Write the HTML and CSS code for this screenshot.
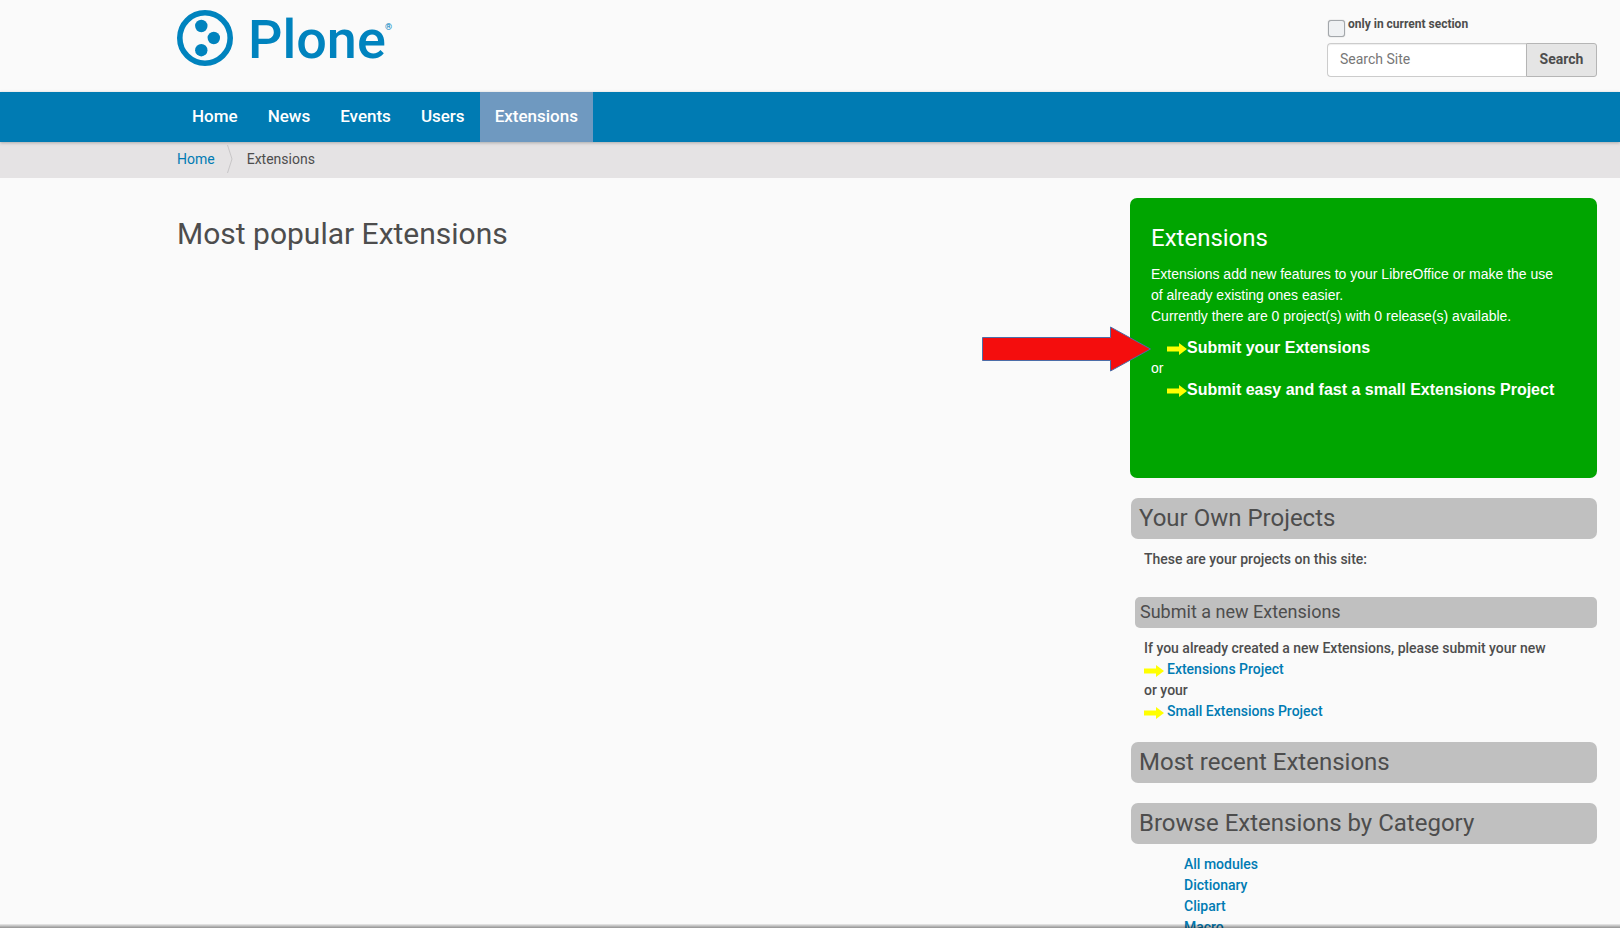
FILE: index.html
```html
<!DOCTYPE html>
<html lang="en">
<head>
<meta charset="utf-8">
<title>Most popular Extensions</title>
<link rel="stylesheet" href="styles.css">
</head>
<body>
<svg class="defs" aria-hidden="true"><symbol id="arrow" viewBox="0 0 20 12"><path d="M0 3.500h12V0l8 6-8 6V8.500H0z" fill="#ff0"/></symbol></svg>
<div class="page">
  <header class="header wrap">
    <a class="logo" href="#" aria-label="Plone">
      <svg width="220" height="70" viewBox="0 0 220 70">
        <circle cx="28" cy="28" r="25.200" fill="none" stroke="#0083be" stroke-width="5.600"/>
        <g fill="#0083be"><circle cx="24.300" cy="16" r="6.200"/><circle cx="36.800" cy="28" r="6.200"/><circle cx="24.300" cy="40.200" r="6.200"/>
        <text class="logo-name" x="71" y="48">Plone</text><text class="logo-mark" x="208" y="20">®</text></g>
      </svg>
    </a>
    <form class="search">
      <div class="section-only"><input type="checkbox" id="only"><label for="only">only in current section</label></div>
      <div class="search-row"><input class="search-field" type="text" placeholder="Search Site" aria-label="Search Site"><button class="search-button" type="button">Search</button></div>
    </form>
  </header>
  <nav class="nav wrap">
    <a href="#">Home</a><a href="#">News</a><a href="#">Events</a><a href="#">Users</a><a class="active" href="#">Extensions</a>
  </nav>
  <div class="crumbs wrap">
    <a href="#">Home</a>
    <svg class="crumb-sep" width="6" height="28" viewBox="0 0 6 28"><path d="M.5 0l4.500 14L.5 28" fill="none" stroke="#c8c6c7"/></svg>
    <span>Extensions</span>
  </div>
  <div class="columns wrap">
    <main><h1>Most popular Extensions</h1></main>
    <aside class="sidebar">
      <section class="promo">
        <svg class="pointer" width="170" height="46" viewBox="0 0 170 46"><path d="M.5 11.500h128V1l40 22-40 22V34.500H.5z" fill="#f40d0d" stroke="#4c6da8"/></svg>
        <h2>Extensions</h2>
        <p>Extensions add new features to your LibreOffice or make the use of already existing ones easier.<br>Currently there are 0 project(s) with 0 release(s) available.</p>
        <div class="submit">
          <a href="#"><svg class="arrow"><use href="#arrow"/></svg>Submit your Extensions</a>
          <span>or</span>
          <a href="#"><svg class="arrow"><use href="#arrow"/></svg>Submit easy and fast a small Extensions Project</a>
        </div>
      </section>
      <h2 class="bar">Your Own Projects</h2>
      <p class="note">These are your projects on this site:</p>
      <h3 class="bar bar-small">Submit a new Extensions</h3>
      <div class="note links">
        <span>If you already created a new Extensions, please submit your new</span>
        <a href="#"><svg class="arrow"><use href="#arrow"/></svg>Extensions Project</a>
        <span>or your</span>
        <a href="#"><svg class="arrow"><use href="#arrow"/></svg>Small Extensions Project</a>
      </div>
      <h2 class="bar">Most recent Extensions</h2>
      <h2 class="bar">Browse Extensions by Category</h2>
      <ul class="categories">
        <li><a href="#">All modules</a></li>
        <li><a href="#">Dictionary</a></li>
        <li><a href="#">Clipart</a></li>
        <li><a href="#">Macro</a></li>
      </ul>
    </aside>
  </div>
  <div class="edge"></div>
</div>
</body>
</html>
```
FILE: styles.css
```css
* { box-sizing: border-box; }
body { margin: 0; background: #fafafa; color: #4d4d4d; font: 14px/21px Roboto, sans-serif; }
h1, h2, h3, p, ul { margin: 0; font-weight: 400; }
a { color: #007bb3; text-decoration: none; }
.defs { position: absolute; width: 0; height: 0; }
.page { position: relative; height: 100vh; overflow: hidden; }
.wrap { padding-left: 177px; padding-right: 23px; }

.header { display: flex; justify-content: space-between; height: 92px; }
.logo { margin-top: 10px; }
.logo svg { display: block; overflow: visible; }
.logo-name { font: 500 54px Roboto, sans-serif; }
.logo-mark { font: 700 9px Roboto, sans-serif; }
.search { width: 270px; padding-top: 13px; }
.section-only { display: flex; height: 30px; font-size: 12px; font-weight: 700; line-height: 22px; }
.section-only input { appearance: none; width: 17px; height: 17px; margin: 7px 3px 0 1px; border: 1px solid #a3a7ab; border-radius: 3px; background: #eff1f3; box-shadow: 0 0 1px #999; }
.search-row { display: flex; height: 34px; }
.search-field { flex: 1; min-width: 0; padding: 0 12px 2px; border: 1px solid #ccc; border-right: 0; border-radius: 4px 0 0 4px; background: #fff; box-shadow: inset 0 1px 1px #eee; font: 14px Roboto, sans-serif; }
.search-field::placeholder { color: #777; }
.search-button { width: 71px; padding: 0 0 2px; border: 1px solid #b5b5b5; border-radius: 0 3px 3px 0; background: #e5e5e5; color: #4d4d4d; font: 700 14px Roboto, sans-serif; }

.nav { position: relative; display: flex; background: #007bb3; box-shadow: 0 1px 3px #aaa; }
.nav a { padding: 0 15px 2px; color: #fff; font-size: 17px; font-weight: 500; line-height: 48px; }
.nav .active { background: #6f99c0; }
.crumbs { display: flex; align-items: center; height: 36px; padding-bottom: 2px; background: #e5e3e4; }
.crumb-sep { margin: 0 14px 0 12px; }

.columns { display: flex; padding-top: 20px; }
.columns main { flex: 1; }
h1 { margin-top: 18px; font-size: 30px; line-height: 36px; }
.sidebar { width: 467px; }
.promo { position: relative; min-height: 280px; padding: 26px 32px 26px 21px; border-radius: 7px; background: #00a500; color: #fff; font-family: "Liberation Sans", Arial, sans-serif; }
.promo h2 { margin-bottom: 12px; font: 24px/28px Roboto, sans-serif; }
.pointer { position: absolute; left: -148px; top: 128px; }
.submit { display: flex; flex-direction: column; margin-top: 10px; }
.submit a { display: flex; align-items: center; padding-left: 16px; color: #fff; font-size: 16px; font-weight: 700; white-space: nowrap; }
.arrow { width: 20px; height: 12px; margin-top: 2px; }
.bar { margin: 20px 0 0 1px; padding: 0 8px; border-radius: 7px; background: #c0c0c0; font-size: 24px; line-height: 41px; }
.bar-small { margin: 27px 0 0 5px; padding: 0 5px 2px; border-radius: 5px; font-size: 18px; line-height: 29px; }
.note { margin: 10px 0 0 14px; font-weight: 500; }
.links { display: flex; flex-direction: column; }
.links a { display: flex; align-items: center; gap: 3px; }
.categories { padding: 10px 0 0 54px; font-weight: 500; list-style: none; }
.edge { position: absolute; left: 0; right: 0; bottom: 0; height: 4px; background: linear-gradient(rgba(0, 0, 0, .06), rgba(0, 0, 0, .42)); }
```
